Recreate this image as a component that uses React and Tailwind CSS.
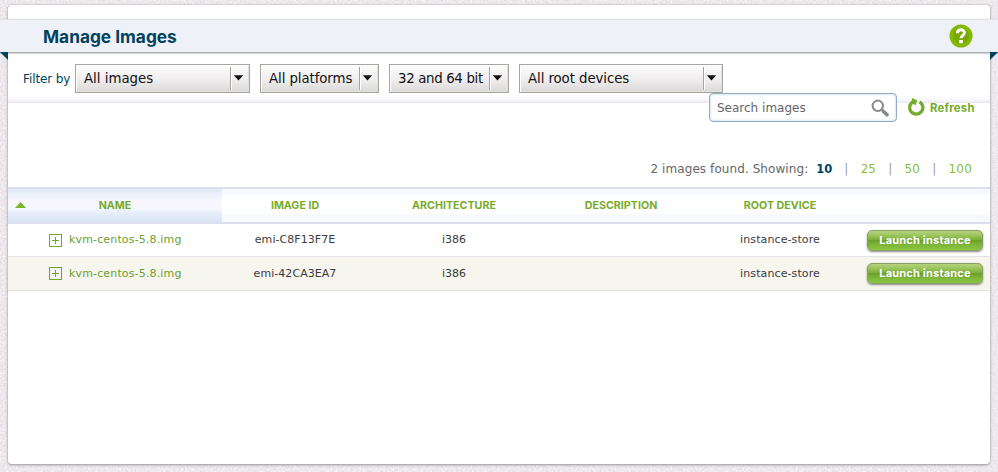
import React from 'react';

const columns = "grid grid-cols-[214px_146px_172px_162px_156px_132px]";

function Texture() {
  return (
    <svg className="absolute inset-0 h-full w-full" aria-hidden="true">
      <filter id="grain" x="0" y="0" width="100%" height="100%" colorInterpolationFilters="sRGB">
        <feTurbulence type="fractalNoise" baseFrequency="0.55" numOctaves="2" seed="4" />
        <feColorMatrix values="0.14 0 0 0 0.86  0.16 0 0 0 0.832  0.14 0 0 0 0.857  0 0 0 0 1" />
      </filter>
      <rect width="100%" height="100%" filter="url(#grain)" />
    </svg>
  );
}

function Select({ label, className }) {
  return (
    <button
      className={
        "flex h-[29px] items-stretch border border-[#a5a49e] bg-gradient-to-b from-[#fdfcfc] via-[#f1efef] to-[#dad9d8] text-left text-[13.33px] text-[#111] shadow-[inset_1px_1px_0_#fff,inset_-1px_-1px_0_#e2e1df] " +
        className
      }
    >
      <span className="flex-1 whitespace-nowrap pl-2 leading-[28px]">{label}</span>
      <span className="my-[2px] flex w-[19px] items-center border-l border-[#a5a49e] pl-[2px] shadow-[inset_1px_0_0_#fff]">
        <svg width="11" height="6" viewBox="0 0 11 6" className="-mt-0.5">
          <path d="M0.8 0.3H10.2L5.5 5.6Z" fill="#111" />
        </svg>
      </span>
    </button>
  );
}

function HeaderCell({ children, className = "" }) {
  return (
    <div className={"flex items-center justify-center pt-px font-['Inter',sans-serif] text-[10.7px] font-bold text-[#78ab2b] " + className}>
      {children}
    </div>
  );
}

function Row({ id, className }) {
  return (
    <div className={columns + " items-center border-b border-[#e2e3e6] text-[11px] leading-[18px] text-[#3c3c3c] " + className}>
      <div className="flex items-center pl-[41px] text-[#6c9f2e]">
        <svg width="13" height="13" viewBox="0 0 13 13" fill="none" stroke="#73a533">
          <rect x="0.5" y="0.5" width="12" height="12" />
          <path d="M3 6.5H10M6.5 3V10" />
        </svg>
        <span className="ml-[7px] tracking-[0.15px]">kvm-centos-5.8.img</span>
      </div>
      <div className="text-center tracking-[0.05px]">{id}</div>
      <div className="text-center">i386</div>
      <div />
      <div className="text-center tracking-[0.1px]">instance-store</div>
      <div className="pl-[9px]">
        <button className="block h-[21px] w-[116px] whitespace-nowrap rounded-[5px] border border-[#8a9c68] bg-[linear-gradient(#b5d37f_0%,#9ac35a_25%,#7eb03e_44%,#6da02b_50%,#7eb739_75%,#8ac640_100%)] font-['Inter',sans-serif] text-[11px] leading-[19px] font-bold tracking-[0.2px] text-white shadow-[0_1px_2px_#888]">
          Launch instance
        </button>
      </div>
    </div>
  );
}

export default function App() {
  return (
    <div className="relative h-[472px] w-[998px] overflow-hidden bg-[#ebe8eb] px-2 pt-[5px] font-['DejaVu_Sans',sans-serif]">
      <Texture />
      <main className="relative h-[459px] w-[982px] rounded bg-white pt-[14px] shadow-[0_1px_3px_#999,0_0_2px_#bbb]">
        <header className="relative -mx-2 flex h-[33px] items-center justify-between border-t border-[#e9dfe7] bg-[#eef1f7] pr-[25px] pl-[43px] shadow-[0_1px_2px_#888]">
          <h1 className="pt-px font-['Inter',sans-serif] text-[17.3px] leading-none font-bold text-[#00435f]">Manage Images</h1>
          <svg width="24" height="24" viewBox="0 0 24 24">
            <circle cx="12" cy="12" r="11.5" fill="#85b800" />
            <circle cx="12" cy="12" r="8" fill="#78a900" />
            <path d="M8.4 9.2C8.5 4.7 15.6 4.9 15.4 8.8C15.3 11.4 12 11.3 12 14.3" fill="none" stroke="white" strokeWidth="3" />
            <rect x="10" y="16" width="4" height="3.2" fill="white" />
          </svg>
          <svg className="absolute top-[32px] left-0" width="8" height="8">
            <path d="M0 0H8V8Z" fill="#00435f" />
          </svg>
          <svg className="absolute top-[32px] right-0" width="8" height="8">
            <path d="M0 0H8L0 8Z" fill="#00435f" />
          </svg>
        </header>

        <section className="flex h-[51px] items-start border-b border-[#ede9ec] bg-[linear-gradient(#fff_84%,#f9fafd_94%,#f1eef1)] pt-[12px] pl-[15px]">
          <label className="w-[52px] whitespace-nowrap text-[12px] leading-[30px] tracking-[-0.1px] text-[#00435f]">Filter by</label>
          <Select label="All images" className="w-[175px]" />
          <Select label="All platforms" className="ml-[10px] w-[119px] tracking-[-0.08px]" />
          <Select label="32 and 64 bit" className="ml-[10px] w-[120px] tracking-[-0.33px]" />
          <Select label="All root devices" className="ml-[10px] w-[204px] tracking-[-0.08px]" />
        </section>

        <section className="relative -mt-[10px] flex h-[29px] items-center justify-end pr-[15px]">
          <div className="flex h-[29px] w-[188px] items-center justify-between rounded-[4px] border border-[#91acc9] bg-white pr-[7px] pl-[7px] text-[12px] text-[#666] shadow-[inset_0_0_3px_#bdcfe5]">
            <span>Search images</span>
            <svg width="18" height="18" viewBox="0 0 18 18" fill="none" stroke="#8a8a8a">
              <circle cx="6.8" cy="6.8" r="5.2" strokeWidth="2" />
              <path d="M10.6 10.6L12.5 12.4" strokeWidth="2" />
              <path d="M12.3 12.2L16 15.8" strokeWidth="3.5" strokeLinecap="round" />
            </svg>
          </div>
          <svg className="ml-[11px]" width="17" height="19" viewBox="0 0 17 19">
            <path d="M11.6 3.9A6.6 6.6 0 1 1 4.2 4.4" fill="none" stroke="#74ab2c" strokeWidth="3.3" />
            <path d="M4.4 0L9.2 2.4L7.6 7.6L5.8 6L2.6 5.2Z" fill="#74ab2c" />
          </svg>
          <span className="ml-[5px] w-[45px] whitespace-nowrap pt-px font-['Inter',sans-serif] text-[11.3px] font-bold tracking-[0.25px] text-[#74ab2c]">Refresh</span>
        </section>

        <section className="flex h-[65px] items-end justify-end pr-[18px] pb-[9px] text-[12px] leading-[17px] text-[#999]">
          <span className="tracking-[0.08px] text-[#666]">2 images found. Showing:</span>
          <b className="ml-[8px] w-[16px] text-[11.5px] text-[#00435f]">10</b>
          <span className="ml-[12px]">|</span><span className="ml-[12.3px] text-[#8abf38]">25</span>
          <span className="ml-[12.3px]">|</span><span className="ml-[12.3px] text-[#8abf38]">50</span>
          <span className="ml-[12.3px]">|</span><span className="ml-[12.3px] tracking-[0.2px] text-[#8abf38]">100</span>
        </section>

        <section>
          <div className={columns + " h-[37px] border-y-2 border-[#dce0ed] bg-[linear-gradient(#f6f9fe_0_5px,#fff_7px,#fff_24px,#f6f9fe_26px)]"}>
            <HeaderCell className="relative bg-[linear-gradient(#dfe9f5,#e9f0fa_5px,#f9f5fd_12px,#f5f8ff_19px,#e6eefb_24px,#dae3f2)]">
              <svg className="absolute top-[13px] left-[7px]" width="11" height="6">
                <path d="M0 6L5.5 0L11 6Z" fill="#7ab52a" />
              </svg>
              NAME
            </HeaderCell>
            <HeaderCell>IMAGE ID</HeaderCell>
            <HeaderCell>ARCHITECTURE</HeaderCell>
            <HeaderCell>DESCRIPTION</HeaderCell>
            <HeaderCell>ROOT DEVICE</HeaderCell>
            <div />
          </div>
          <Row id="emi-C8F13F7E" className="h-[33px] bg-white" />
          <Row id="emi-42CA3EA7" className="h-[34px] bg-[#f6f5ee]" />
        </section>
      </main>
    </div>
  );
}
